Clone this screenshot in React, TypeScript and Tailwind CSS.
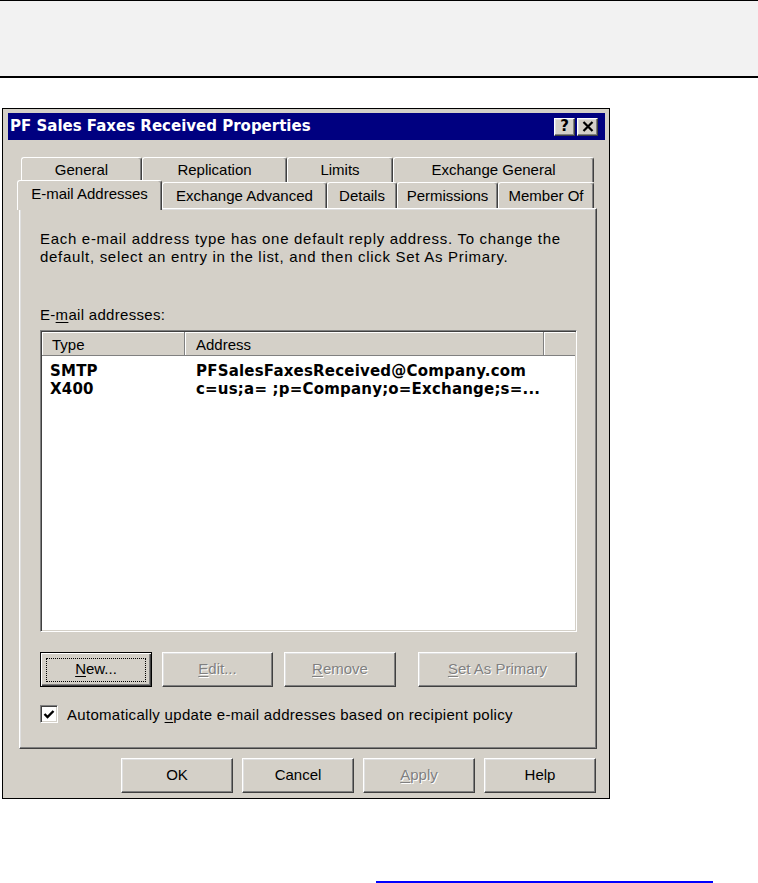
import React from "react";

const FONT = "font-['Liberation_Sans',Arial,sans-serif]";
const BOLD = "font-['DejaVu_Sans',Verdana,sans-serif] font-bold";

const RAISED =
  "border border-t-white border-l-white border-r-[#404040] border-b-[#404040] shadow-[inset_-1px_-1px_0_#808080,inset_1px_1px_0_#dfdfdf]";
const DEFAULT_BTN =
  "border border-black shadow-[inset_1px_1px_0_#ffffff,inset_-1px_-1px_0_#404040,inset_-2px_-2px_0_#808080]";

function U({ children }: { children: React.ReactNode }) {
  return <span className="underline underline-offset-[2px]">{children}</span>;
}

function Tab({ w, children, selected }: { w: string; children: React.ReactNode; selected?: boolean }) {
  return (
    <div
      className={`${w} ${
        selected ? "relative z-10 -mt-[2px] h-[30px] pb-[2px]" : "h-full pt-[1px]"
      } flex items-center justify-center bg-[#d4d0c8] border border-b-0 border-t-white border-l-white border-r-[#404040] rounded-t-[3px] shadow-[inset_-1px_0_0_#808080] text-[15px] text-black`}
    >
      {children}
    </div>
  );
}

function Btn({
  w,
  children,
  disabled,
  isDefault,
}: {
  w: string;
  children: React.ReactNode;
  disabled?: boolean;
  isDefault?: boolean;
}) {
  return (
    <div
      className={`${w} h-[35px] flex items-center justify-center bg-[#d4d0c8] text-[15px] ${
        isDefault ? DEFAULT_BTN : RAISED
      } ${disabled ? "text-[#808080] [text-shadow:1px_1px_0_#ffffff]" : "text-black"}`}
    >
      {isDefault ? (
        <div className="w-[100px] h-[24px] flex items-center justify-center border border-dotted border-black">
          {children}
        </div>
      ) : (
        children
      )}
    </div>
  );
}

export default function App() {
  return (
    <div className={`w-[758px] h-[883px] bg-white overflow-hidden flex flex-col ${FONT}`}>
      {/* top band */}
      <div className="h-[78px] shrink-0 bg-[#f2f2f2] border-t border-b-2 border-black" />

      {/* dialog */}
      <div className="mt-[30px] ml-[2px] w-[608px] h-[691px] shrink-0 bg-[#d4d0c8] border border-black pt-[4px] pl-[5px] pr-[4px] flex flex-col">
        {/* title bar */}
        <div className="h-[27px] bg-[#000080] flex items-center pl-[2px] pr-[7px]">
          <span className={`${BOLD} text-white text-[15px] leading-none`}>PF Sales Faxes Received Properties</span>
          <div className="ml-auto flex gap-[2px]">
            <div className={`w-[21px] h-[18px] bg-[#d4d0c8] ${RAISED} flex items-center justify-center`}>
              <span className={`${BOLD} text-[15px] leading-none text-black`}>?</span>
            </div>
            <div className={`w-[21px] h-[18px] bg-[#d4d0c8] ${RAISED} flex items-center justify-center`}>
              <svg width="12" height="11" viewBox="0 0 12 11">
                <path d="M1.5 1 L10.5 10 M10.5 1 L1.5 10" stroke="#000" strokeWidth="2.2" />
              </svg>
            </div>
          </div>
        </div>

        {/* tabs */}
        <div className="mt-[17px] ml-[11px] w-[578px] flex flex-col">
          <div className="h-[25px] flex ml-[2px]">
            <Tab w="w-[121px]">General</Tab>
            <Tab w="w-[145px]">Replication</Tab>
            <Tab w="w-[106px]">Limits</Tab>
            <Tab w="w-[201px]">Exchange General</Tab>
          </div>
          <div className="h-[26px] flex items-start -ml-[2px]">
            <Tab w="w-[145px]" selected>
              E-mail Addresses
            </Tab>
            <Tab w="w-[165px]">Exchange Advanced</Tab>
            <Tab w="w-[70px]">Details</Tab>
            <Tab w="w-[101px]">Permissions</Tab>
            <Tab w="w-[96px]">Member Of</Tab>
          </div>

          {/* panel */}
          <div className="h-[541px] border border-t-white border-l-white border-r-[#404040] border-b-[#404040] shadow-[inset_-1px_-1px_0_#808080,inset_1px_1px_0_#dfdfdf] pt-[21px] pl-[20px] pr-[19px] flex flex-col text-[15px] text-black">
            <p className="leading-[18px] tracking-[0.7px]">
              Each e-mail address type has one default reply address. To change the
              <br />
              default, select an entry in the list, and then click Set As Primary.
            </p>
            <div className="mt-[40px] leading-[18px] tracking-[0.3px]">
              E-<U>m</U>ail addresses:
            </div>

            {/* list view */}
            <div className="mt-[6px] h-[302px] bg-white border border-t-[#808080] border-l-[#808080] border-r-white border-b-white shadow-[inset_1px_1px_0_#404040,inset_-1px_-1px_0_#d4d0c8] p-[1px] flex flex-col">
              <div className="h-[24px] flex bg-[#d4d0c8]">
                <div className="w-[143px] pl-[10px] pt-[3px] flex items-center border-r border-b border-r-[#808080] border-b-[#808080] shadow-[inset_1px_1px_0_#ffffff]">
                  Type
                </div>
                <div className="w-[359px] pl-[11px] pt-[3px] flex items-center border-r border-b border-r-[#808080] border-b-[#808080] shadow-[inset_1px_1px_0_#ffffff]">
                  Address
                </div>
                <div className="flex-1 border-b border-b-[#808080] shadow-[inset_1px_1px_0_#ffffff]" />
              </div>
              <div className={`pt-[6px] flex flex-col ${BOLD} text-[15px] tracking-[0.2px] text-black`}>
                <div className="h-[18px] flex items-center">
                  <span className="w-[143px] pl-[8px]">SMTP</span>
                  <span className="pl-[11px]">PFSalesFaxesReceived@Company.com</span>
                </div>
                <div className="h-[18px] flex items-center">
                  <span className="w-[143px] pl-[8px]">X400</span>
                  <span className="pl-[11px]">c=us;a= ;p=Company;o=Exchange;s=...</span>
                </div>
              </div>
            </div>

            {/* buttons */}
            <div className="mt-[20px] flex">
              <Btn w="w-[112px]" isDefault>
                <span>
                  <U>N</U>ew...
                </span>
              </Btn>
              <div className="ml-[10px]">
                <Btn w="w-[111px]" disabled>
                  <span>
                    <U>E</U>dit...
                  </span>
                </Btn>
              </div>
              <div className="ml-[11px]">
                <Btn w="w-[112px]" disabled>
                  <span>
                    <U>R</U>emove
                  </span>
                </Btn>
              </div>
              <div className="ml-auto">
                <Btn w="w-[159px]" disabled>
                  <span>
                    <U>S</U>et As Primary
                  </span>
                </Btn>
              </div>
            </div>

            {/* checkbox */}
            <div className="mt-[18px] h-[18px] flex items-center">
              <div className="w-[18px] h-[18px] bg-white border border-t-[#808080] border-l-[#808080] border-r-white border-b-white shadow-[inset_1px_1px_0_#404040,inset_-1px_-1px_0_#d4d0c8] flex items-center justify-center">
                <svg width="12" height="11" viewBox="0 0 12 11">
                  <path d="M1.5 5 L4.5 8 L10.5 2" stroke="#000" strokeWidth="2.4" fill="none" />
                </svg>
              </div>
              <span className="ml-[9px] mt-[3px] tracking-[0.3px]">
                Automatically <U>u</U>pdate e-mail addresses based on recipient policy
              </span>
            </div>
          </div>
        </div>

        {/* bottom buttons */}
        <div className="mt-[9px] flex justify-end gap-[9px] pr-[9px]">
          <Btn w="w-[112px]">OK</Btn>
          <Btn w="w-[112px]">Cancel</Btn>
          <Btn w="w-[112px]" disabled>
            <span>
              <U>A</U>pply
            </span>
          </Btn>
          <Btn w="w-[112px]">Help</Btn>
        </div>
      </div>

      {/* link underline */}
      <div className="mt-[82px] ml-[376px] w-[337px] h-[2px] shrink-0 bg-[#0000ff]" />
    </div>
  );
}
